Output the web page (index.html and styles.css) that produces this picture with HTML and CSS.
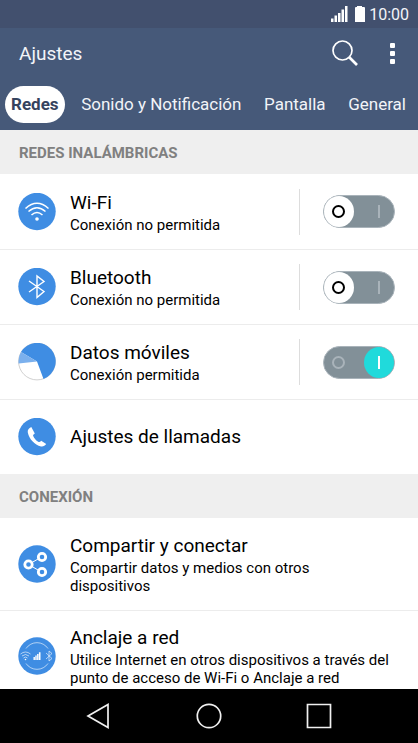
FILE: index.html
```html
<!DOCTYPE html>
<html lang="es">
<head>
<meta charset="utf-8">
<meta name="viewport" content="width=device-width, initial-scale=1">
<title>Ajustes</title>
<link rel="stylesheet" href="styles.css">
</head>
<body>
<div class="status">
  <svg class="status-icons" width="36" height="18" viewBox="0 1 36 18" fill="#fff">
    <path d="M0 13.500h2.500V17H0zM3.500 10.500H6V17H3.500zM7 8h2.500v9H7zM10.500 4.500H13V17h-2.500zM14 1h2.500v16H14z"/>
    <path d="M26 2V1h5v1h2q1 0 1 1v14H24V3q0-1 1-1z"/>
  </svg>
  <time>10:00</time>
</div>
<header class="header">
  <h1>Ajustes</h1>
  <button class="icon-button" type="button" aria-label="Buscar">
    <svg width="28" height="28" viewBox="0 0 28 28" fill="none" stroke="#fff">
      <circle cx="11.500" cy="10.500" r="9.500" stroke-width="1.700"/>
      <path d="M18 17l8 8" stroke-width="2.600"/>
    </svg>
  </button>
  <button class="icon-button" type="button" aria-label="Más opciones">
    <svg width="28" height="28" viewBox="0 0 28 28" fill="#fff">
      <rect x="11" y="3" width="5" height="5" rx="1"/><rect x="11" y="11" width="5" height="5" rx="1"/><rect x="11" y="19" width="5" height="5" rx="1"/>
    </svg>
  </button>
</header>
<nav class="tabs">
  <a class="tab tab-active" href="#redes" aria-current="page">Redes</a>
  <a class="tab" href="#sonido">Sonido y Notificación</a>
  <a class="tab" href="#pantalla">Pantalla</a>
  <a class="tab" href="#general">General</a>
</nav>
<main class="content">
  <section>
    <h2>REDES INALÁMBRICAS</h2>
    <ul class="list">
      <li class="row">
        <svg class="icon" viewBox="0 0 38 38">
          <circle cx="19" cy="18.500" r="18.700" fill="#3f8de3"/>
          <g fill="none" stroke="#fff" stroke-width="1.500"><path d="M7.500 15.500Q19 5 30.500 15.500"/><path d="M10.500 18.500Q19 11 27.500 18.500"/><path d="M13.500 22Q19 17 24.500 22"/></g>
          <circle cx="19" cy="26" r="1.800" fill="#fff"/>
        </svg>
        <label class="text" for="wifi"><span class="title">Wi-Fi</span><span class="sub">Conexión no permitida</span></label>
        <div class="control"><span class="toggle"><input id="wifi" type="checkbox" role="switch"><span class="knob"></span></span></div>
      </li>
      <li class="row">
        <svg class="icon" viewBox="0 0 38 38">
          <circle cx="19" cy="18.500" r="18.700" fill="#3f8de3"/>
          <path d="M11 13l15 10.500L19 29.500V8l7 5.500L11 24" fill="none" stroke="#fff" stroke-width="1.400"/>
        </svg>
        <label class="text" for="bluetooth"><span class="title">Bluetooth</span><span class="sub">Conexión no permitida</span></label>
        <div class="control"><span class="toggle"><input id="bluetooth" type="checkbox" role="switch"><span class="knob"></span></span></div>
      </li>
      <li class="row">
        <svg class="icon" viewBox="0 .5 38 38">
          <circle cx="19" cy="19" r="18.400" fill="#fff" stroke="#bbb" stroke-width=".7"/>
          <path d="M19 19L3 9.600A18.600 18.600 0 1 1 25.500 36.400z" fill="#3f8de3"/>
          <path d="M19 19L3 9.600A18.600 18.600 0 0 0 .6 21z" fill="#7bb0ed"/>
        </svg>
        <label class="text" for="data"><span class="title">Datos móviles</span><span class="sub">Conexión permitida</span></label>
        <div class="control"><span class="toggle"><input id="data" type="checkbox" role="switch" checked><span class="knob"></span></span></div>
      </li>
      <li class="row">
        <svg class="icon" viewBox="0 .5 38 38">
          <circle cx="19" cy="19" r="18.700" fill="#3f8de3"/>
          <path d="M13.300 9.500c-2.400 1-4 3-3.500 5.500 1.400 6.500 6.700 12.500 13.200 13.900 2 .4 4-.5 5.200-2.400l-5-3.200c-1 1.200-2 1.600-3 1-2.200-1.500-4-3.600-5-5.900-.4-1 .2-1.600 1.600-2.500z" fill="#fff"/>
        </svg>
        <a class="text" href="#llamadas"><span class="title">Ajustes de llamadas</span></a>
      </li>
    </ul>
  </section>
  <section>
    <h2>CONEXIÓN</h2>
    <ul class="list">
      <li class="row">
        <svg class="icon" viewBox="0 0 38 38">
          <circle cx="19" cy="19" r="18.700" fill="#3f8de3"/>
          <path d="M23.500 12L10.500 19.500l13 7.500" fill="none" stroke="#fff"/>
          <g fill="#3f8de3" stroke="#fff" stroke-width="2.800"><circle cx="10.500" cy="19.500" r="3.700"/><circle cx="24" cy="12" r="3.700"/><circle cx="24" cy="27" r="3.700"/></g>
        </svg>
        <a class="text" href="#compartir"><span class="title">Compartir y conectar</span><span class="sub">Compartir datos y medios con otros dispositivos</span></a>
      </li>
      <li class="row">
        <svg class="icon" viewBox="0 0 38 38">
          <circle cx="19" cy="19" r="18.700" fill="#3f8de3"/>
          <g fill="none" stroke="#fff" stroke-opacity=".75" stroke-width=".8"><path d="M8 11.500A13.300 13.300 0 0 1 30 11.500M8 26.500A13.300 13.300 0 0 0 30 26.500"/><path d="M2.500 17q5-4 10 0M4 19q3.500-3 7 0M5.500 21q2-2 4 0"/><path d="M28 16l6 5.500-3 2.500v-10l3 2.500-6 5.500"/></g>
          <circle cx="7.500" cy="22.500" r=".8" fill="#fff"/>
          <path d="M15.500 20h1.400v3h-1.400zM17.300 18.500h1.400V23h-1.400zM19.100 17h1.400v6h-1.400zM20.900 15.300h1.600V23h-1.600z" fill="#fff"/>
        </svg>
        <a class="text" href="#anclaje"><span class="title">Anclaje a red</span><span class="sub">Utilice Internet en otros dispositivos a través del punto de acceso de Wi-Fi o Anclaje a red</span></a>
      </li>
    </ul>
  </section>
</main>
<footer class="navbar">
  <button type="button" aria-label="Atrás"><svg width="28" height="28" viewBox="0 0 28 28"><path d="M3 14L23 2.500v23z"/></svg></button>
  <button type="button" aria-label="Inicio"><svg width="28" height="28" viewBox="0 0 28 28"><circle cx="14" cy="14" r="11.700"/></svg></button>
  <button type="button" aria-label="Recientes"><svg width="28" height="28" viewBox="0 0 28 28"><path d="M2.500 2.500h23v23h-23z"/></svg></button>
</footer>
</body>
</html>
```
FILE: styles.css
```css
*, *::before, *::after { box-sizing: border-box; }

body {
  margin: 0;
  height: 100vh;
  display: flex;
  flex-direction: column;
  overflow: hidden;
  background: #fff;
  color: #000;
  font-family: Roboto, "Liberation Sans", sans-serif;
}

h1, h2, ul { margin: 0; padding: 0; }
a { color: inherit; text-decoration: none; }
svg { display: block; flex: none; }
button { padding: 0; border: 0; background: none; }

.status {
  flex: none;
  display: flex;
  align-items: center;
  justify-content: flex-end;
  gap: 2px;
  padding: 2px 9px 0;
  background: #42506e;
  color: #f2f4f8;
  font-size: 16px;
  line-height: 26px;
}

.header {
  flex: none;
  display: flex;
  align-items: center;
  gap: 20px;
  padding: 12px 11px 6px 19px;
  background: #465979;
  color: #f2f4f8;
}

.header h1 {
  flex: 1;
  font-size: 19px;
  font-weight: 400;
  line-height: 28px;
}

.tabs {
  flex: none;
  display: flex;
  justify-content: space-between;
  padding: 12px 6px 7px 5px;
  background: #465979;
  color: #f2f4f8;
  font-size: 17px;
  line-height: 37px;
  white-space: nowrap;
}

.tab { padding: 0 6px; border-radius: 19px; }
.tab-active { background: #fff; color: #35435e; font-weight: 700; }

.content {
  flex: 1;
  min-height: 0;
  overflow-y: auto;
  scrollbar-width: none;
}

h2 {
  padding: 2px 19px 0;
  background: #efefef;
  color: #808080;
  font-size: 15px;
  font-weight: 700;
  line-height: 42px;
}

.list { list-style: none; }

.row {
  display: flex;
  align-items: center;
  gap: 14px;
  min-height: 75px;
  padding: 15px 23px 15px 18px;
}

.row + .row { padding: 14px 23px 14px 18px; border-top: 1px solid #ececec; }
.icon { width: 38px; height: 38px; }
.text { flex: 1; }
a.text { padding-right: 4px; }
.title, .sub { display: block; }
.title { font-size: 19px; line-height: 26px; }
.sub { font-size: 15px; line-height: 18px; }

.control {
  display: flex;
  align-items: center;
  height: 46px;
  margin: -1px 0;
  padding-left: 23px;
  border-left: 1px solid #ddd;
}

.toggle {
  position: relative;
  width: 72px;
  height: 33px;
  border: 1px solid #a9b3ba;
  border-radius: 17px;
  background: #829098;
}

.toggle input {
  position: absolute;
  inset: 0;
  width: 100%;
  height: 100%;
  margin: 0;
  opacity: 0;
  z-index: 3;
}

/* Off and on marks of the switch track */
.toggle::before, .toggle::after { content: ""; position: absolute; z-index: 2; }

.toggle::before {
  top: 9px;
  left: 8px;
  width: 13px;
  height: 13px;
  border: 2px solid #a9b3ba;
  border-radius: 50%;
}

.toggle::after {
  top: 9px;
  right: 14px;
  width: 2px;
  height: 13px;
  background: #a9b3ba;
}

.knob {
  position: absolute;
  top: 0;
  left: 0;
  width: 30px;
  height: 31px;
  border-radius: 50%;
  background: #fff;
}

.toggle:has(:checked)::after { background: #fff; }
.toggle:not(:has(:checked))::before { border-color: #000; }
.toggle input:checked + .knob { left: auto; right: 0; background: #20dadb; }

.navbar {
  flex: none;
  display: flex;
  justify-content: space-between;
  padding: 13px 85px;
  background: #000;
}

.navbar svg { fill: none; stroke: #f0f0f0; stroke-width: 1.7px; }
```
